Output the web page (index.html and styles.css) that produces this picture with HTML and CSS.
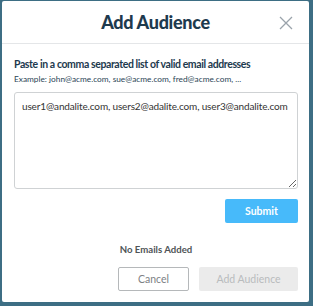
FILE: index.html
```html
<!DOCTYPE html>
<html>
<head>
<meta charset="utf-8">
<link rel="stylesheet" href="styles.css">
</head>
<body>
<div class="modal">
  <div class="header">
    <h1 class="title">Add Audience</h1>
    <button class="close" aria-label="Close">
      <svg width="14" height="14" viewBox="0 0 14 14"><path d="M1 1L13 13M13 1L1 13" stroke="#9aa3ab" stroke-width="1.3" fill="none"/></svg>
    </button>
  </div>
  <div class="body">
    <div class="label">Paste in a comma separated list of valid email addresses</div>
    <div class="hint">Example: john@acme.com, sue@acme.com, fred@acme.com, ...</div>
    <textarea class="emails">user1@andalite.com, users2@adalite.com, user3@andalite.com</textarea>
    <div class="submit-row"><button class="btn submit">Submit</button></div>
    <div class="status">No Emails Added</div>
    <div class="footer">
      <button class="btn cancel">Cancel</button>
      <button class="btn add">Add Audience</button>
    </div>
  </div>
</div>
</body>
</html>
```
FILE: styles.css
```css
html, body { margin: 0; padding: 0; }
body {
  background: #3d6e84;
  width: 313px;
  height: 306px;
  font-family: Lato, "Open Sans", sans-serif;
  padding: 1px 4px 4px 2px;
  box-sizing: border-box;
}
.modal {
  background: #fff;
  height: 301px;
  border-radius: 2px;
  display: flex;
  flex-direction: column;
}
.header {
  position: relative;
  height: 42px;
  border-bottom: 1px solid #e4e6e8;
  display: flex;
  align-items: center;
  justify-content: center;
}
.title {
  margin: 0;
  font-size: 18px;
  font-weight: 900;
  color: #1d3a4e;
  letter-spacing: -0.3px;
}
.close {
  position: absolute;
  right: 16px;
  top: 15px;
  background: none;
  border: 0;
  padding: 0;
  width: 14px;
  height: 14px;
}
.body {
  padding: 13px 11px 0 12px;
  display: flex;
  flex-direction: column;
}
.label {
  font-size: 10.5px;
  font-weight: 700;
  color: #1d3a4e;
  line-height: 14px;
  letter-spacing: -0.4px;
}
.hint {
  font-size: 8.3px;
  color: #2b4556;
  margin-top: 2px;
  line-height: 12px;
}
.emails {
  margin-top: 7px;
  height: 97px;
  box-sizing: border-box;
  border: 1px solid #cfd2d4;
  border-radius: 3px;
  padding: 7px 4px 7px 7px;
  font-family: Lato, "Open Sans", sans-serif;
  font-size: 10px;
  letter-spacing: -0.15px;
  color: #333;
  resize: vertical;
  width: 284px;
  overflow: hidden;
}
.submit-row {
  display: flex;
  justify-content: flex-end;
  margin-top: 10px;
}
.btn {
  font-family: Lato, "Open Sans", sans-serif;
  height: 24px;
  border-radius: 2px;
  font-size: 10.5px;
  padding: 0;
}
.submit {
  width: 73px;
  background: #47bafa;
  border: 0;
  color: #fff;
  font-weight: 700;
}
.status {
  text-align: center;
  font-size: 9.6px;
  font-weight: 700;
  color: #4f5457;
  margin-top: 21px;
  line-height: 12px;
}
.footer {
  display: flex;
  justify-content: flex-end;
  gap: 10px;
  margin-top: 11px;
}
.cancel {
  width: 71px;
  background: #fff;
  border: 1px solid #b5b8ba;
  color: #7d8184;
}
.add {
  width: 99px;
  background: #ebebeb;
  border: 0;
  color: #b9bbbd;
}
```
